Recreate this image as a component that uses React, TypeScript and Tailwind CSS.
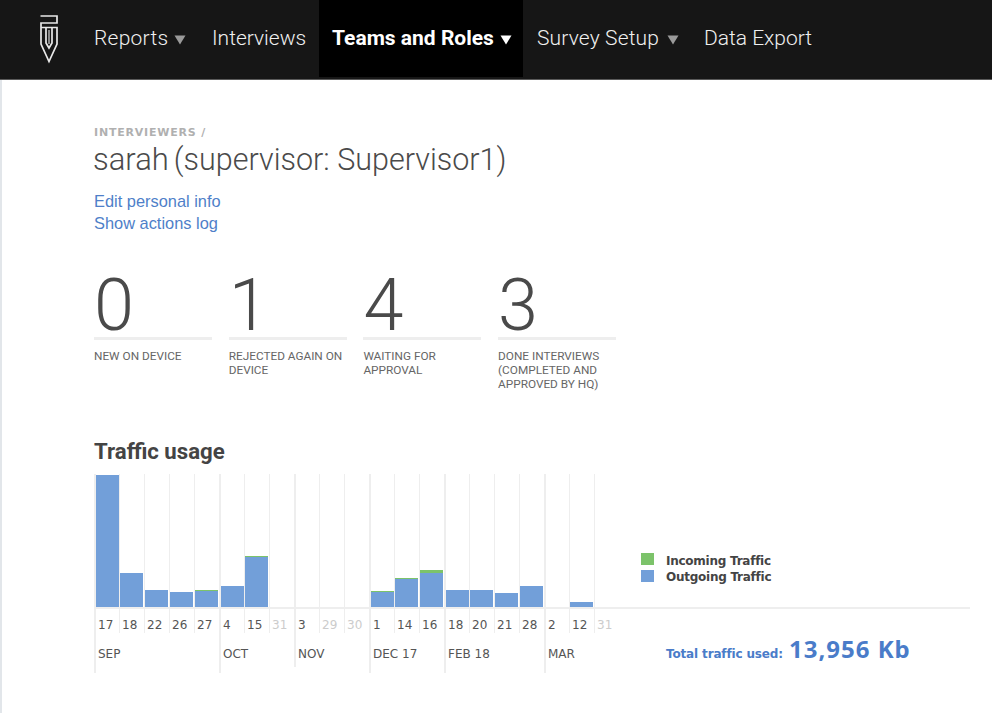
import React from "react";

type Day = { d: string; h?: number; g?: number; zero?: boolean };
type Month = { name: string; days: Day[]; cls: string };

const months: Month[] = [
  { name: "SEP", cls: "h-[199px]", days: [{ d: "17", h: 132 }, { d: "18", h: 34 }, { d: "22", h: 17 }, { d: "26", h: 15 }, { d: "27", h: 16, g: 1 }] },
  { name: "OCT", cls: "h-[199px]", days: [{ d: "4", h: 21 }, { d: "15", h: 50, g: 1 }, { d: "31", zero: true }] },
  { name: "NOV", cls: "h-[193px]", days: [{ d: "3" }, { d: "29", zero: true }, { d: "30", zero: true }] },
  { name: "DEC 17", cls: "h-[199px]", days: [{ d: "1", h: 15, g: 1 }, { d: "14", h: 28, g: 1 }, { d: "16", h: 34, g: 3 }] },
  { name: "FEB 18", cls: "h-[199px]", days: [{ d: "18", h: 17 }, { d: "20", h: 17 }, { d: "21", h: 14 }, { d: "28", h: 21 }] },
  { name: "MAR", cls: "h-[199px]", days: [{ d: "2" }, { d: "12", h: 5 }, { d: "31", zero: true }] },
];

const Caret = ({ active, cls }: { active?: boolean; cls: string }) => (
  <svg width="12" height="10" viewBox="0 0 12 10" className={`${cls} mt-[2px]`}>
    <path d="M0.5 0.5H11.5L6 9.5Z" fill={active ? "#ffffff" : "#9a9a9a"} />
  </svg>
);

const Logo = () => (
  <svg width="24" height="52" viewBox="0 0 24 52" fill="none" stroke="#e8e8e8" strokeWidth="1.7" className="ml-[37px] mt-[13px]">
    <path d="M3.5 3H20V10H4V14.5H20V31L12 48.5L4 31V10" />
    <path d="M9 14.5V30L12 35L15 30V14.5" />
    <path d="M12 17V31" strokeWidth="1.1" />
  </svg>
);

const Stat = ({ n, label }: { n: string; label: string }) => (
  <div className="w-[118px]">
    <div className="text-[72px] leading-[79px] font-light text-[#4a4a4a] h-[71px]">{n}</div>
    <div className="h-[3px] bg-[#eeeeee]" />
    <div className="mt-[9px] text-[11.8px] leading-[14px] uppercase text-[#666666]">{label}</div>
  </div>
);

export default function App() {
  return (
    <div className="w-[992px] h-[713px] overflow-hidden bg-white font-['Roboto',sans-serif] flex flex-col">
      <header className="h-[80px] shrink-0 bg-[#161616] border-b border-[#5a5a5a] flex items-start text-[21px] font-light text-[#f0f0f0]">
        <div className="w-[94px] shrink-0"><Logo /></div>
        <a className="h-[77px] flex items-center w-[118px] tracking-[0.25px]">Reports<Caret cls="ml-[6px]" /></a>
        <a className="h-[77px] flex items-center w-[107px]">Interviews</a>
        <a className="h-[77px] flex items-center w-[204px] pl-[13px] bg-black text-white font-bold">Teams and Roles<Caret active cls="ml-[6px]" /></a>
        <a className="h-[77px] flex items-center w-[181px] pl-[14px] tracking-[0.15px]">Survey Setup<Caret cls="ml-[8px]" /></a>
        <a className="h-[77px] flex items-center">Data Export</a>
      </header>
      <main className="flex-1 border-l-[2px] border-[#e2e6ea] pl-[92px] pr-[22px]">
        <div className="mt-[46px] text-[11px] leading-[14px] font-['DejaVu_Sans',sans-serif] font-bold tracking-[0.8px] text-[#b0b0b0]">INTERVIEWERS /</div>
        <h1 className="mt-[2px] text-[31px] leading-[36px] font-light text-[#4a4a4a] -ml-[1px] flex items-baseline whitespace-nowrap">sarah<span className="ml-[5px] text-[30.5px]">(supervisor: Supervisor1)</span></h1>
        <div className="mt-[12px] text-[16.4px] leading-[23px] font-['Liberation_Sans',sans-serif] text-[#4f7fc9]">
          <a className="block">Edit personal info</a>
          <a className="block -mt-[1px]">Show actions log</a>
        </div>
        <div className="mt-[31px] flex gap-[16.7px] h-[125px]">
          <Stat n="0" label="New on device" />
          <Stat n="1" label="Rejected again on device" />
          <Stat n="4" label="Waiting for approval" />
          <Stat n="3" label="Done interviews (completed and approved by HQ)" />
        </div>
        <h2 className="mt-[46px] text-[22.2px] leading-[28px] font-bold text-[#444444]">Traffic usage</h2>
        <div className="mt-[9px] flex font-['DejaVu_Sans',sans-serif]">
          {months.map((m) => (
            <div key={m.name} className={`${m.cls} border-l-[2px] border-[#eeeeee] flex flex-col shrink-0`}>
              <div className="flex h-[159px]">
                {m.days.map((day, i) => {
                  const last = i === m.days.length - 1;
                  const first = i === 0;
                  return (
                    <div key={day.d + i} className={`${first || last ? "w-[24px]" : "w-[25px]"} ${last ? "" : "border-r border-[#eeeeee]"} flex flex-col shrink-0`}>
                      <div className="h-[133px] flex flex-col justify-end">
                        {day.g ? <div className="bg-[#7cc36a] w-[23px]" style={{ height: day.g }} /> : null}
                        {day.h ? <div className="bg-[#729fd9] w-[23px]" style={{ height: day.h }} /> : null}
                      </div>
                      <div className="h-[2px] bg-[#eeeeee]" />
                      <div className={`pl-[2px] mt-[8px] text-[12px] leading-[16px] whitespace-nowrap ${day.zero ? "text-[#cccccc]" : "text-[#555555]"}`}>{day.d}</div>
                    </div>
                  );
                })}
              </div>
              <div className="pl-[2px] mt-[13px] text-[12px] leading-[16px] text-[#555555] whitespace-nowrap">{m.name}</div>
            </div>
          ))}
          <div className="flex-1 flex flex-col">
            <div className="h-[135px] border-b-[2px] border-[#eeeeee] flex flex-col justify-end pb-[22px] pl-[22px]">
              <div className="flex items-center gap-[12px] text-[12px] leading-[16px] font-bold tracking-[-0.25px] text-[#444444]"><span className="w-[13px] h-[12px] bg-[#7cc36a] -mt-[4px]" />Incoming Traffic</div>
              <div className="flex items-center gap-[12px] text-[12px] leading-[16px] font-bold tracking-[-0.25px] text-[#444444]"><span className="w-[13px] h-[12px] bg-[#729fd9] -mt-[3px]" />Outgoing Traffic</div>
            </div>
            <div className="mt-[24px] pl-[47px] flex items-baseline gap-[6px] font-bold text-[#4a7cc9] whitespace-nowrap">
              <span className="text-[12px] tracking-[-0.15px]">Total traffic used:</span>
              <span className="text-[24px] leading-[32px] tracking-[1px] font-['Noto_Sans',sans-serif]">13,956 Kb</span>
            </div>
          </div>
        </div>
      </main>
    </div>
  );
}
